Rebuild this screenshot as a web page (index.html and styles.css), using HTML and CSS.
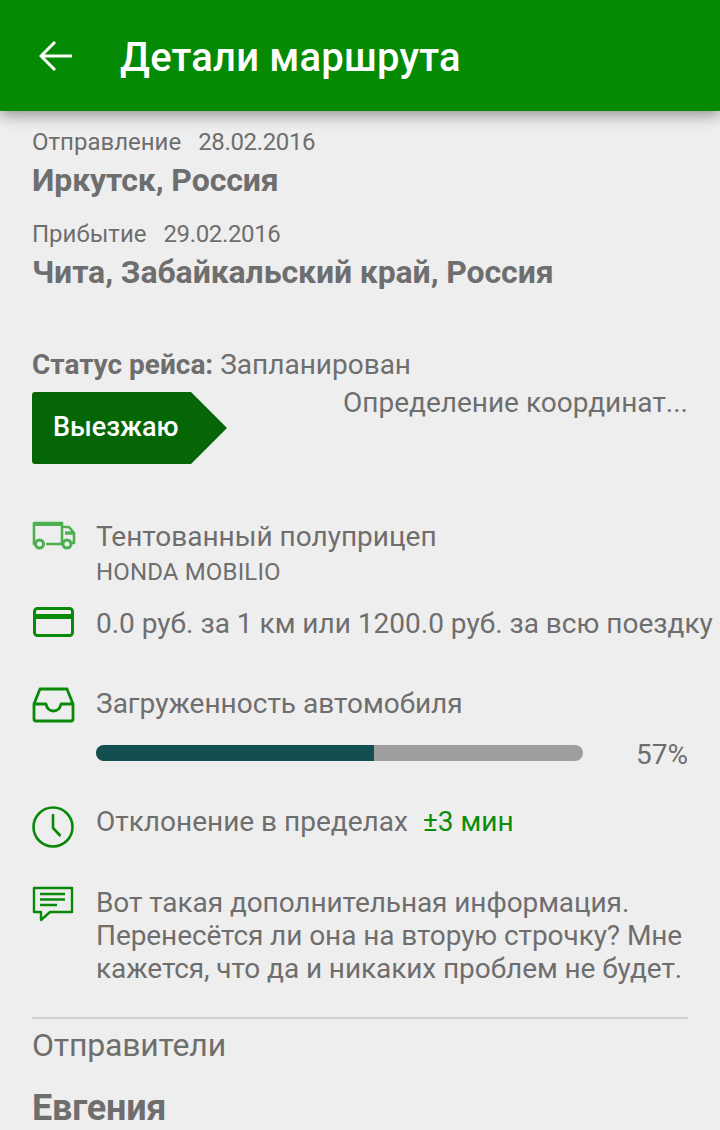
FILE: index.html
```html
<!DOCTYPE html>
<html lang="ru">
  <head>
    <meta charset="UTF-8">
    <title>Детали маршрута</title>
    <link rel="stylesheet" href="styles.css">
  </head>
  <body>
    <div class="app">
      <header class="top-bar">
        <svg class="back-icon" viewBox="0 0 34 32" width="34" height="32">
          <path d="M33 16H3M16 2L2 16l14 14" fill="none" stroke="#fff" stroke-width="3"/>
        </svg>
        <h1 class="top-bar__title">Детали маршрута</h1>
      </header>

      <main class="content">
        <section class="route">
          <p class="route__label">Отправление <span class="route__date">28.02.2016</span></p>
          <p class="route__place">Иркутск, Россия</p>
          <p class="route__label route__label--next">Прибытие <span class="route__date">29.02.2016</span></p>
          <p class="route__place">Чита, Забайкальский край, Россия</p>
        </section>

        <p class="status"><b>Статус рейса:</b> Запланирован</p>
        <div class="action-row">
          <div class="go-btn">Выезжаю</div>
          <p class="coords">Определение координат...</p>
        </div>

        <div class="info-row info-row--truck">
          <svg class="info-icon" viewBox="0 0 44 30" width="44" height="30">
            <g fill="none" stroke="#4caf50" stroke-linejoin="round">
              <path d="M3 24H2V3h28v21H14" stroke-width="2.6"/>
              <path d="M2 4.500h28" stroke-width="3"/>
              <path d="M30 7h7l5 6v10h-2M30 24h-1" stroke-width="2.6"/>
              <path d="M33 13h9" stroke-width="3.400"/>
              <circle cx="7.500" cy="24" r="4" stroke-width="3"/>
              <circle cx="35" cy="24" r="4" stroke-width="3"/>
            </g>
          </svg>
          <div>
            <p class="info-text">Тентованный полуприцеп</p>
            <p class="info-sub">HONDA MOBILIO</p>
          </div>
        </div>

        <div class="info-row info-row--price">
          <svg class="info-icon" viewBox="0 0 44 30" width="44" height="30">
            <rect x="2.500" y="1.500" width="38" height="27" rx="3" fill="none" stroke="#088a08" stroke-width="3"/>
            <rect x="2.500" y="7" width="38" height="5" fill="#088a08"/>
          </svg>
          <p class="info-text info-text--nowrap">0.0 руб. за 1 км или 1200.0 руб. за всю поездку</p>
        </div>

        <div class="info-row info-row--load">
          <svg class="info-icon" viewBox="0 0 44 36" width="44" height="36">
            <path d="M2 17L8 2h27l6 15v15a2 2 0 0 1-2 2H4a2 2 0 0 1-2-2zM2 17h12c1 5 4 7 7.500 7s6.500-2 7.500-7h12" fill="none" stroke="#088a08" stroke-width="2.8" stroke-linejoin="round"/>
          </svg>
          <div class="load">
            <p class="info-text">Загруженность автомобиля</p>
            <div class="load__line">
              <div class="load__bar"><div class="load__fill" style="width: 57%"></div></div>
              <span class="load__pct">57%</span>
            </div>
          </div>
        </div>

        <div class="info-row info-row--time">
          <svg class="info-icon" viewBox="0 0 44 44" width="44" height="44">
            <circle cx="21" cy="22" r="19.500" fill="none" stroke="#088a08" stroke-width="2.6"/>
            <path d="M21 9v14l7.500 8" fill="none" stroke="#088a08" stroke-width="2.6"/>
          </svg>
          <p class="info-text">Отклонение в пределах <span class="info-accent">±3 мин</span></p>
        </div>

        <div class="info-row info-row--note">
          <svg class="info-icon" viewBox="0 0 44 36" width="44" height="36">
            <path d="M2 2h38v24H18l-9 8v-8H2z" fill="none" stroke="#088a08" stroke-width="2.400" stroke-linejoin="round"/>
            <path d="M8 8h25M8 13.500h25M8 19h17" fill="none" stroke="#088a08" stroke-width="2.400"/>
          </svg>
          <p class="info-text info-text--lines">Вот такая дополнительная информация. Перенесётся ли она на вторую строчку? Мне кажется, что да и никаких проблем не будет.</p>
        </div>

        <hr class="divider">
        <h2 class="senders">Отправители</h2>
        <p class="sender-name">Евгения</p>
      </main>
    </div>
  </body>
</html>
```

FILE: styles.css
```css
* {
  margin: 0;
  padding: 0;
  box-sizing: border-box;
}
html, body {
  height: 100%;
  overflow: hidden;
}
body {
  font-family: Roboto, "Noto Sans", sans-serif;
  background-color: #eeeeee;
  color: #6e6e6e;
}
.top-bar {
  height: 111px;
  display: flex;
  align-items: center;
  padding-left: 39px;
  gap: 47px;
  background-color: #048a04;
  box-shadow: 0 4px 14px rgba(0, 0, 0, 0.4);
  position: relative;
}
.back-icon {
  flex: none;
}
.top-bar__title {
  color: #fff;
  font-size: 40px;
  font-weight: 500;
  line-height: 46px;
  letter-spacing: 0.2px;
  margin-top: 5px;
}
.content {
  padding: 17px 32px 0;
}
.route__label {
  font-size: 24px;
  line-height: 28px;
}
.route__label--next {
  margin-top: 21px;
}
.route__date {
  margin-left: 11px;
  letter-spacing: -0.35px;
}
.route__place {
  font-size: 32px;
  font-weight: 700;
  line-height: 38px;
  margin-top: 5px;
  letter-spacing: -0.1px;
}
.status {
  font-size: 28px;
  line-height: 32px;
  margin-top: 58px;
}
.action-row {
  display: flex;
  justify-content: space-between;
  margin-top: 11px;
}
.go-btn {
  width: 195px;
  height: 72px;
  padding: 0 0 2px 21px;
  display: flex;
  align-items: center;
  color: #fff;
  font-size: 27px;
  font-weight: 500;
  background-color: #056605;
  border-radius: 3px;
  clip-path: polygon(0 0, 159px 0, 100% 50%, 159px 100%, 0 100%);
}
.coords {
  font-size: 28px;
  line-height: 32px;
  margin-top: -5px;
}
.info-row {
  display: flex;
  gap: 20px;
}
.info-icon {
  flex: none;
}
.info-row--truck {
  margin-top: 56px;
}
.info-row--price {
  margin-top: 21px;
  margin-right: -32px;
  white-space: nowrap;
}
.info-row--load {
  margin-top: 47px;
}
.info-row--time {
  margin-top: 34px;
}
.info-row--note {
  margin-top: 37px;
}
.info-text {
  font-size: 28px;
  line-height: 33px;
}
.info-text--nowrap {
  white-space: nowrap;
}
.info-text--lines {
  letter-spacing: -0.08px;
}
.info-sub {
  font-size: 24px;
  line-height: 28px;
  margin-top: 5px;
  letter-spacing: 0.15px;
}
.info-accent {
  color: #0b8c0b;
  margin-left: 8px;
}
.load {
  flex: 1;
}
.load__line {
  display: flex;
  align-items: flex-start;
  justify-content: space-between;
  margin-top: 17px;
}
.load__bar {
  width: 487px;
  height: 16px;
  margin-top: 8px;
  border-radius: 8px;
  background-color: #9e9e9e;
  overflow: hidden;
}
.load__fill {
  height: 100%;
  background-color: #134f50;
}
.load__pct {
  font-size: 28px;
  line-height: 32px;
  margin-top: 2px;
}
.divider {
  border: none;
  height: 2px;
  background-color: #d0d0d0;
  margin-top: 32px;
}
.senders {
  font-size: 32px;
  font-weight: 400;
  line-height: 38px;
  margin-top: 7px;
  letter-spacing: -0.2px;
}
.sender-name {
  font-size: 36px;
  font-weight: 700;
  line-height: 42px;
  margin-top: 23px;
  letter-spacing: -0.2px;
}
```
